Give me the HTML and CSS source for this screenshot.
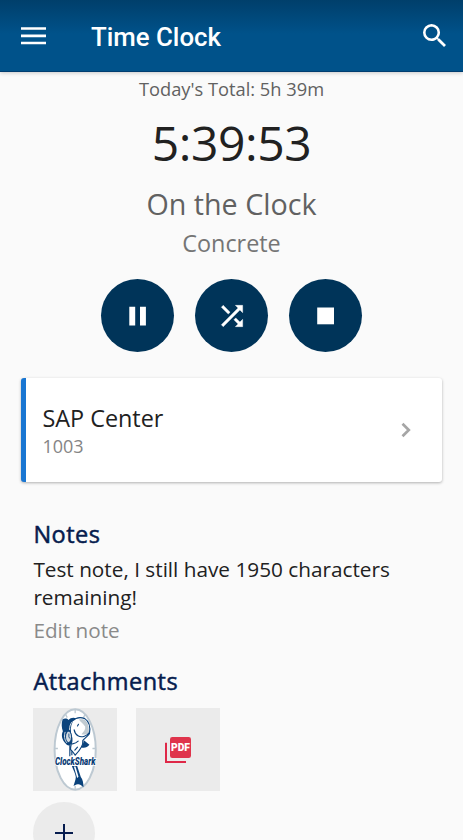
FILE: index.html
```html
<!DOCTYPE html>
<html lang="en">
<head>
<meta charset="utf-8">
<title>Time Clock</title>
<link rel="stylesheet" href="styles.css">
</head>
<body>
<header class="bar">
  <svg class="menu" viewBox="0 0 25 18"><path d="M0 1.5h25M0 8.8h25M0 16h25" stroke="#fff" stroke-width="2.7"/></svg>
  <h1 class="title">Time Clock</h1>
  <svg class="search" viewBox="3 3 17.5 17.5"><path fill="#fff" d="M15.5 14h-.79l-.28-.27A6.471 6.471 0 0 0 16 9.5 6.5 6.5 0 1 0 9.5 16c1.61 0 3.09-.59 4.23-1.57l.27.28v.79l5 4.99L20.49 19l-4.99-5zm-6 0C7.01 14 5 11.99 5 9.5S7.01 5 9.5 5 14 7.01 14 9.5 11.99 14 9.5 14z"/></svg>
</header>
<main>
  <section class="clock">
    <p class="total">Today's Total: 5h 39m</p>
    <p class="time">5:39:53</p>
    <p class="state">On the Clock</p>
    <p class="task">Concrete</p>
    <div class="actions">
      <button class="round" aria-label="Pause"><svg viewBox="0 0 32 32"><path fill="#fff" d="M7.3 6.7h5.9v18.7H7.3zM18 6.7h5.9v18.7H18z"/></svg></button>
      <button class="round" aria-label="Switch"><svg viewBox="0 0 24 24"><path fill="#fff" stroke="#fff" stroke-width=".3" d="M10.59 9.17L5.41 4 4 5.41l5.17 5.17 1.42-1.41zM14.5 4l2.04 2.04L4 18.59 5.41 20 17.96 7.46 20 9.5V4h-5.5zm.33 9.41l-1.41 1.41 3.13 3.13L14.5 20H20v-5.5l-2.04 2.04-3.13-3.13z"/></svg></button>
      <button class="round" aria-label="Stop"><svg viewBox="0 0 32 32"><path fill="#fff" d="M7.2 7.5h16.8v16.8H7.2z"/></svg></button>
    </div>
  </section>
  <section class="card">
    <div>
      <p class="place">SAP Center</p>
      <p class="code">1003</p>
    </div>
    <svg class="chevron" viewBox="0 0 10 16"><path d="M1.5 1.8L7.8 8l-6.3 6.2" fill="none" stroke="#a6a6a6" stroke-width="2.7"/></svg>
  </section>
  <section class="details">
    <h2>Notes</h2>
    <p class="note"><span class="line">Test note, I still have 1950 characters</span> remaining!</p>
    <p class="edit">Edit note</p>
    <h2 class="attach">Attachments</h2>
    <div class="tiles">
      <div class="tile">
        <svg class="shark" viewBox="10 8 250 250">
          <ellipse cx="134" cy="133" rx="62" ry="121" fill="#fff" stroke="#bdc9d2" stroke-width="6"/>
          <path d="M134 12v12M134 242v12M72 130h10M186 130h10M105 27l5 10M164 27l-5 10" stroke="#bdc9d2" stroke-width="4"/>
          <path fill="#0b437c" d="M96 43c6-5 13-4 18 1 6-7 15-8 23-5l-8 13c-8 5-12 13-11 24 10 8 12 28 5 38-5 9-12 8-17 2-12-13-15-26-9-38-4-10-5-24-1-35z"/>
          <path fill="#fff" stroke="#0b437c" stroke-width="3.5" d="M126 47c10-10 25-12 37-7 14 9 17 26 14 45-9 12-17 16-20 21 2 12-6 26-23 44-5-7-8-12-14-17 0-16 6-22 4-34-7-19-6-38 2-52z"/>
          <path fill="#c1cbd1" d="M145 43c17-4 27 4 29 21l2 19c-9 5-16 6-23 4 7-7 13-15 11-23-6-8-14-14-19-21z"/>
          <path fill="none" stroke="#0b437c" stroke-width="3.5" stroke-linecap="round" d="M131 74c3 17 17 24 31 19 7-2 11-6 14-10M141 62l3-5M126 116c7-1 12-3 17-8M133 135l8-9"/>
          <path fill="#0b437c" d="M160 105l4 3 13 11c-6 8-14 10-25 8 4-7 7-13 8-22z"/>
          <ellipse cx="114" cy="95" rx="9" ry="17" fill="#d4dce2" stroke="#0b437c" stroke-width="3"/>
          <path fill="none" stroke="#0b437c" stroke-width="2.5" d="M115 85v10l3 5"/>
          <path fill="none" stroke="#d4dce2" stroke-width="3" d="M104 80c-4 10-3 23 5 33M117 74c0-11 3-20 9-25"/>
          <path fill="none" stroke="#0b437c" stroke-width="3.5" d="M118 117v36M124 138v12"/>
          <path fill="#0b437c" d="M124 183h16l11 33c6 7 8 19 8 31-6-6-11-8-15-9-7-1-11 3-15 5 3-9 6-17 7-27-2-13-8-22-12-33z"/>
          <path fill="#fff" d="M130 184h5l9 31-4 4z"/>
          <text class="brand" x="73" y="181" textLength="122" lengthAdjust="spacingAndGlyphs">ClockShark</text>
        </svg>
      </div>
      <div class="tile">
        <svg class="pdf" viewBox="0 0 78 78">
          <path d="M3 17v58H63" fill="none" stroke="#df2848" stroke-width="6"/>
          <rect x="15" y="0" width="63" height="63" rx="7" fill="#df344c"/>
          <text class="pdftext" x="18" y="43" textLength="57" lengthAdjust="spacingAndGlyphs">PDF</text>
        </svg>
      </div>
    </div>
    <button class="add" aria-label="Add attachment"><svg viewBox="0 0 18 18"><path d="M9 0v18M0 9h18" stroke="#061c4e" stroke-width="2"/></svg></button>
  </section>
</main>
</body>
</html>
```

FILE: styles.css
```css
* { box-sizing: border-box; }
body {
  margin: 0;
  height: 840px;
  overflow: hidden;
  background: #fafafa;
  font-family: "Open Sans", sans-serif;
  color: #212121;
}
p, h1, h2 { margin: 0; font-weight: 400; white-space: nowrap; }
svg { display: block; flex: none; }
button { border: 0; padding: 0; }
.bar {
  height: 72px;
  padding: 0 17px 0 21px;
  display: flex;
  align-items: center;
  background: linear-gradient(#003f6b 0, #00528a 34px, #00528a 100%);
  border-bottom: 1px solid #003d70;
  box-shadow: 0 1px 4px rgba(0, 0, 0, .2);
}
.menu { width: 25px; height: 18px; }
.title {
  margin: 2px auto 0 45px;
  font: 500 25.8px/30px Roboto, sans-serif;
  color: #fff;
}
.search { width: 23px; height: 23px; }
.clock { display: flex; flex-direction: column; align-items: center; }
.total { margin-top: 4px; font-size: 18.3px; line-height: 26px; color: #616161; }
.time { margin-top: 9px; font-size: 48px; line-height: 64px; letter-spacing: -.4px; }
.state { margin-top: 9px; font-size: 28.7px; line-height: 40px; color: #616161; }
.task { margin-top: 2px; font-size: 23.4px; line-height: 34px; color: #757575; }
.actions { margin-top: 19px; display: flex; gap: 21px; }
.round {
  width: 73px;
  height: 73px;
  border-radius: 50%;
  display: grid;
  place-items: center;
  background: #003459;
}
.round svg { width: 32px; height: 32px; }
.card {
  margin: 26px 21px 0 21.4px;
  height: 104px;
  padding: 0 31px 0 16px;
  display: flex;
  align-items: center;
  justify-content: space-between;
  background: #fff;
  border-left: 5px solid #1976d2;
  border-radius: 3px;
  box-shadow: 0 1px 3px rgba(0, 0, 0, .3);
}
.place { font-size: 23.4px; line-height: 32px; }
.code { font-size: 18px; line-height: 24px; color: #858585; }
.chevron { width: 10px; height: 16px; }
.details { padding: 36px 33.4px 0; }
h2 {
  font-size: 23.5px;
  line-height: 32px;
  color: #061c4e;
  letter-spacing: .5px;
  -webkit-text-stroke: .5px #061c4e;
}
.note { margin-top: 5px; font-size: 20.75px; line-height: 28px; }
.line { display: block; }
.edit { margin-top: 5px; font-size: 20.7px; line-height: 28px; color: #8a8a8a; }
.attach { margin-top: 21px; }
.tiles { margin-top: 11px; display: flex; gap: 19.5px; }
.tile {
  width: 83.4px;
  height: 83px;
  display: grid;
  place-items: center;
  background: #ebebeb;
}
.shark { width: 83px; height: 83px; }
.pdf { width: 26px; height: 26px; }
.brand { font: italic 900 31px Roboto, sans-serif; fill: #0b3c74; stroke: #fff; stroke-width: 5px; paint-order: stroke; }
.pdftext { font: 900 31px Roboto, sans-serif; fill: #fff; }
.add {
  margin-top: 11px;
  width: 62px;
  height: 62px;
  border-radius: 50%;
  display: grid;
  place-items: center;
  background: #ebebeb;
}
.add svg { width: 18px; height: 18px; }
```
